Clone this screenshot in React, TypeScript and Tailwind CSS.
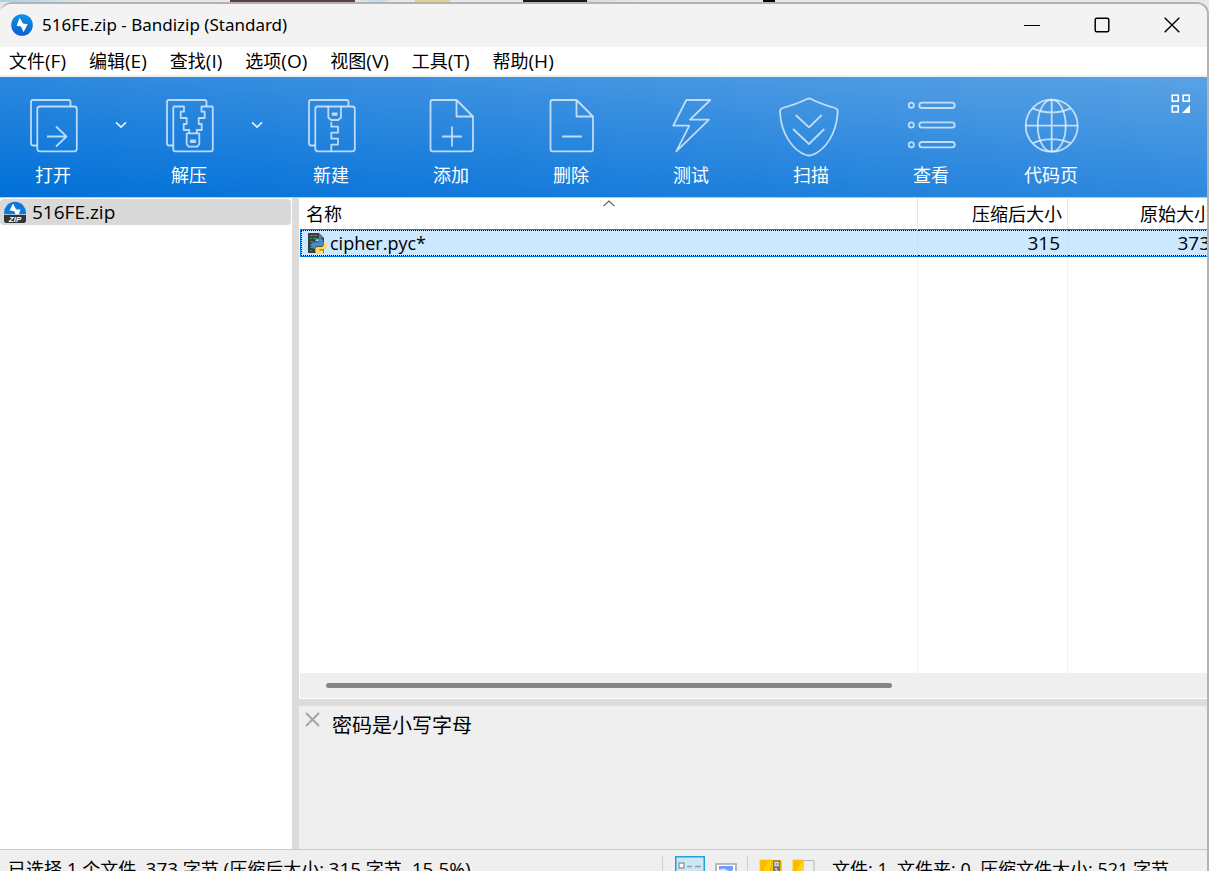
import React from "react";

type IconProps = { children: React.ReactNode };

function ToolIcon({ children }: IconProps) {
  return (
    <svg
      viewBox="0 0 60 60"
      className="size-[60px] overflow-visible"
      fill="none"
      stroke="#e3f0fc"
      strokeOpacity="0.8"
      strokeWidth="1.8"
      strokeLinejoin="round"
      aria-hidden="true"
    >
      {children}
    </svg>
  );
}

const backSheet = "M14 48.5H10Q8 48.5 8 46V5Q8 3 10 3H45.5Q47.5 3 47.5 5V9";
const page = "M35.5 3H11.5Q9.5 3 9.5 5V52Q9.5 54.3 11.5 54.3H50Q52 54.3 52 52V19.5ZM35.5 3V19.5H52";

const icons = {
  open: (
    <>
      <path d={backSheet} />
      <rect x="14.3" y="9.5" width="39.5" height="44.8" rx="2.5" />
      <path d="M24 39.5H43.5M33 29.5L43.5 39.5L33 49.5" />
    </>
  ),
  extract: (
    <>
      <path d={backSheet} />
      <path d="M14.3 9.5H25V14.7H21.7V21H27.7V27H24.7V33H30.3V36.3M53.8 9.5H42.5V14.7H45.7V21H39.7V27H42.7V33H37.7V36.3M14.3 9.5V52.3Q14.3 54.3 16.3 54.3H51.8Q53.8 54.3 53.8 52.3V9.5" />
      <path d="M27.7 36.3H40.3V47L38.3 49.7H29.7L27.7 47Z" />
      <rect x="31.8" y="43.5" width="4.4" height="1.6" />
    </>
  ),
  create: (
    <>
      <path d={backSheet} />
      <rect x="14.3" y="9.5" width="39.5" height="44.8" rx="2.5" />
      <path d="M27.3 9.5V20.5L30 23H37.3L40 20.5V9.5" />
      <rect x="31.8" y="16.3" width="3.8" height="1.6" />
      <path d="M30.3 25V29.7H37V35.7H30.3V41.7H37V47.7H30.3V54.3" />
    </>
  ),
  add: (
    <>
      <path d={page} />
      <path d="M31 29.5V49.5M21 39.5H41" />
    </>
  ),
  remove: (
    <>
      <path d={page} />
      <path d="M21 39.5H41" />
    </>
  ),
  test: <path d="M25.3 3H49.3L29 22.7H48L15.3 54.3L28.3 28.7H12.3Z" />,
  scan: (
    <>
      <path d="M26 2Q28 1 30 2Q40 7 54 11Q57 12 56.7 15C55.5 38 43 54 31 58Q28 59 25 58C13 54 0 38 -1 15Q-1.2 12 1.5 11Q16 7 26 2Z" />
      <path d="M14.7 18L28 30.3L40.7 18M12 32L28 47L43.3 32" />
    </>
  ),
  view: (
    <>
      <circle cx="10.3" cy="8.3" r="2.6" />
      <circle cx="10.3" cy="28" r="2.6" />
      <circle cx="10.3" cy="47.7" r="2.6" />
      <rect x="18.3" y="5.7" width="35.4" height="5.3" rx="2.6" />
      <rect x="18.3" y="25.4" width="35.4" height="5.3" rx="2.6" />
      <rect x="18.3" y="45" width="35.4" height="5.3" rx="2.6" />
    </>
  ),
  globe: (
    <>
      <circle cx="30.7" cy="28.7" r="26" />
      <path d="M30.7 2.7V54.7M4.7 28.7H56.7M11.7 11.3Q30.7 19.5 49.7 11.3M11.7 46.1Q30.7 38 49.7 46.1" />
      <ellipse cx="30.7" cy="28.7" rx="14" ry="26" />
    </>
  ),
};

function ToolButton({ label, icon, className = "w-[120px]" }: { label: string; icon: React.ReactNode; className?: string }) {
  return (
    <button type="button" className={`${className} flex shrink-0 flex-col items-center pt-5 text-lg text-white`}>
      <ToolIcon>{icon}</ToolIcon>
      <span className="mt-1">{label}</span>
    </button>
  );
}

function DropArrow({ label }: { label: string }) {
  return (
    <button type="button" aria-label={label} className="flex w-[30px] justify-center pt-11">
      <svg viewBox="0 0 12 8" className="h-2 w-3" fill="none" stroke="#e3f0fc" strokeWidth="1.7">
        <path d="M1 1.3L6 6L11 1.3" />
      </svg>
    </button>
  );
}

function AppLogo() {
  return (
    <svg viewBox="0 0 22 22" className="size-[22px]" aria-hidden="true">
      <defs>
        <linearGradient id="logo" x1="0" y1="0" x2="0" y2="1">
          <stop offset="0" stopColor="#0d93e2" />
          <stop offset="1" stopColor="#0b5fd0" />
        </linearGradient>
      </defs>
      <circle cx="11" cy="11" r="10.8" fill="url(#logo)" />
      <path d="M8.6 3.8L5.6 11.8L10 12.4L12.6 18.3L16.6 10.2L12 9.6Z" fill="#fff" />
    </svg>
  );
}

function ZipIcon() {
  return (
    <svg viewBox="0 0 22 22" className="size-[22px]" aria-hidden="true">
      <path d="M0.2 13.2A10.9 10.9 0 1 1 21.8 13.2Z" fill="#0a7bdc" />
      <path d="M9 2.5L5.6 9.6L10.3 10.2L11.3 13.2H14.8L16.6 8.8L12 8.2Z" fill="#fff" />
      <path d="M0 14H22V19.5Q22 22 19.5 22H2.5Q0 22 0 19.5Z" fill="#333" />
      <text x="11" y="20.9" textAnchor="middle" fill="#fff" fontSize="8" fontWeight="700" fontStyle="italic" fontFamily="Liberation Sans, sans-serif">ZIP</text>
    </svg>
  );
}

function PycIcon() {
  return (
    <svg viewBox="0 0 20 22" className="h-[22px] w-5 shrink-0" aria-hidden="true">
      <path d="M1 1H12L17 6V21H1Z" fill="#3b3f42" />
      <path d="M12 1V6H17Z" fill="#777" />
      <path d="M3 3.5H6M7 3.5H10M3 6.5H5M6 6.5H10M3 9.5H6M3 12.5H5M3 15.5H5M3 18.5H5" stroke="#27a53c" strokeWidth="1.2" />
      <path d="M7.8 9Q7.8 6.3 12 6.3Q16 6.3 16 9V12.3Q16 14.3 13.8 14.3H10Q8 14.3 8 16.7H6.5Q4 16 4 13.3Q4 10.3 7.3 10.3H12V9.6H7.8Z" fill="#4a8cc7" />
      <path d="M16.6 10.5H17.5Q20 11 20 14Q20 17.5 17 17.5H12.5V18.2H16.5V19.5Q16.5 22 12.5 22Q8.3 22 8.3 19.5V17Q8.3 15 10.6 15H14Q16.6 15 16.6 13Z" fill="#ffdc50" />
      <circle cx="10.3" cy="8.3" r="0.8" fill="#fff" />
      <circle cx="14.4" cy="20" r="0.8" fill="#fff" />
    </svg>
  );
}

function FolderIcon({ zipped }: { zipped: boolean }) {
  return (
    <svg viewBox="0 0 23 20" className="h-5 w-[23px]" aria-hidden="true">
      <path d="M11 1.5H22V20H11Z" fill={zipped ? "#f6bd00" : "#eee"} stroke={zipped ? "#e0a800" : "#b5b5b5"} />
      <path d="M0.5 0.5H12V7L10 11V20H0.5Z" fill="#ffd400" />
      <path d="M1.5 1.5H11L5 9V20H1.5Z" fill="#fbb800" />
      {zipped && (
        <>
          <rect x="14" y="1.5" width="7" height="18.5" fill="#777" />
          <path d="M16 3.5H19V6.5H16ZM16 10H18M17 12H19M16 14H18M17 16H19" fill="none" stroke="#ddd" strokeWidth="1.3" />
        </>
      )}
    </svg>
  );
}

const menus: [string, string][] = [
  ["文件", "(F)"],
  ["编辑", "(E)"],
  ["查找", "(I)"],
  ["选项", "(O)"],
  ["视图", "(V)"],
  ["工具", "(T)"],
  ["帮助", "(H)"],
];

function Num({ children }: { children: string }) {
  return <span className="text-[19px] leading-6">{children}</span>;
}

export default function App() {
  return (
    <div className="h-screen overflow-hidden bg-[#e8e8e8] font-['Open_Sans','Noto_Sans_CJK_SC',sans-serif] text-lg leading-6 text-black">
      <div className="flex h-[calc(100vh+20px)] flex-col">
        <div className="h-[2px] shrink-0 bg-[linear-gradient(to_right,#a9cfe6_0,#e2e6e8_90px,#e8e8e8_230px,#5b4040_230px,#5b4040_355px,#e8e8e8_355px,#b8dbe9_380px,#e8e8e8_392px,#e8e8e8_415px,#e4cf83_415px,#e4cf83_450px,#e8e8e8_450px,#e8e8e8_523px,#181818_523px,#181818_587px,#d8d8d8_587px,#e8e8e8_640px,#e8e8e8_763px,#000_763px,#000_775px,#e8e8e8_775px)]" />
        <div className="flex min-h-0 flex-1 flex-col overflow-hidden rounded-t-xl border-t-2 border-r-2 border-[#b3b3b3] bg-white">
          <header className="flex h-[43px] shrink-0 items-center bg-[#f3f3f3] pb-[2px] pl-[11px]">
            <AppLogo />
            <h1 className="ml-[9px] flex-1 font-['Noto_Sans',sans-serif] text-[17px]">516FE.zip - Bandizip (Standard)</h1>
            <div className="flex h-full">
              <button type="button" aria-label="最小化" className="flex w-[70px] items-center justify-center">
                <svg viewBox="0 0 16 16" className="size-4" stroke="#000" strokeWidth="1"><path d="M0 8.5H16" /></svg>
              </button>
              <button type="button" aria-label="最大化" className="flex w-[70px] items-center justify-center">
                <svg viewBox="0 0 16 16" className="size-4" fill="none" stroke="#000" strokeWidth="1.5"><rect x="1.2" y="1.2" width="13.6" height="13.6" rx="1.5" /></svg>
              </button>
              <button type="button" aria-label="关闭" className="flex w-[70px] items-center justify-center">
                <svg viewBox="0 0 16 16" className="size-4" stroke="#000" strokeWidth="1.4"><path d="M0.7 0.7L15.3 15.3M15.3 0.7L0.7 15.3" /></svg>
              </button>
            </div>
          </header>

          <nav className="flex h-[30px] shrink-0 items-center gap-[23px] border-b-2 border-[#f0f0f0] bg-white pl-[9px]">
            {menus.map(([name, key]) => (
              <button type="button" key={name} className="whitespace-nowrap">
                {name}
                <Num>{key}</Num>
              </button>
            ))}
          </nav>

          <div className="flex h-[121px] shrink-0 border-b border-[#c4c8cc] bg-[linear-gradient(to_top_right,#0070d8,#2c88de,#5aa2e4)]">
            <ToolButton label="打开" icon={icons.open} className="w-[106px]" />
            <DropArrow label="打开选项" />
            <ToolButton label="解压" icon={icons.extract} className="w-[106px]" />
            <DropArrow label="解压选项" />
            <div className="-ml-px flex">
              <ToolButton label="新建" icon={icons.create} />
              <ToolButton label="添加" icon={icons.add} />
              <ToolButton label="删除" icon={icons.remove} />
              <ToolButton label="测试" icon={icons.test} />
              <ToolButton label="扫描" icon={icons.scan} />
              <ToolButton label="查看" icon={icons.view} />
              <ToolButton label="代码页" icon={icons.globe} />
            </div>
            <button type="button" aria-label="工具栏布局" className="mt-[17px] mr-4 ml-auto self-start">
              <svg viewBox="0 0 20 20" className="size-5" fill="none" stroke="#fff" strokeWidth="1.6">
                <rect x="1.2" y="1.2" width="6" height="6" />
                <rect x="12.2" y="1.2" width="6" height="6" />
                <rect x="1.2" y="12" width="6" height="6" />
                <path d="M19 11V19H11Z" fill="#fff" stroke="none" />
              </svg>
            </button>
          </div>

          <main className="flex min-h-0 flex-1">
            <aside className="w-[292px] shrink-0 bg-white pt-px pr-px">
              <button type="button" className="flex h-[26px] w-full items-center gap-[6px] rounded-sm bg-[#d9d9d9] pl-1">
                <ZipIcon />
                <Num>516FE.zip</Num>
              </button>
            </aside>
            <div className="w-[7px] shrink-0 bg-[#dcdcdc]" />
            <section className="flex min-w-0 flex-1 flex-col">
              <div className="min-h-0 flex-1 overflow-hidden pl-[2px]">
                <table className="h-full w-[calc(100%+11px)] table-fixed border-separate border-spacing-0">
                  <thead>
                    <tr className="h-8">
                      <th scope="col" className="relative border-r border-[#e5e5e5] p-0 pl-[5px] text-left font-normal">
                        名称
                        <svg viewBox="0 0 12 7" className="absolute top-[2px] left-1/2 h-[7px] w-3 -translate-x-1/2" fill="none" stroke="#555" strokeWidth="1.1">
                          <path d="M0.5 6.2L6 1L11.5 6.2" />
                        </svg>
                      </th>
                      <th scope="col" className="w-[150px] border-r border-[#e5e5e5] p-0 pr-[5px] text-right font-normal">压缩后大小</th>
                      <th scope="col" className="w-[150px] p-0 pr-[6px] text-right font-normal">原始大小</th>
                    </tr>
                  </thead>
                  <tbody>
                    <tr className="h-[26px] bg-[#cce8ff] outline outline-[#0078d7]">
                      <td className="border-y border-r border-l border-dotted border-y-black border-r-[#b9dcf5] border-l-black p-0 pl-[5px]">
                        <div className="flex h-6 items-center gap-[3px]">
                          <PycIcon />
                          <span>cipher.pyc*</span>
                        </div>
                      </td>
                      <td className="border-y border-r border-dotted border-y-black border-r-[#b9dcf5] p-0 pr-[7px] text-right text-[19px] leading-6">315</td>
                      <td className="border-y border-dotted border-y-black p-0 pr-2 text-right text-[19px] leading-6">373</td>
                    </tr>
                    <tr aria-hidden="true">
                      <td className="border-r border-[#eef2f7] p-0" />
                      <td className="border-r border-[#eef2f7] p-0" />
                      <td className="p-0" />
                    </tr>
                  </tbody>
                </table>
              </div>
              <div className="mb-px ml-px flex h-[25px] shrink-0 items-center bg-[#efefef] pr-8 pl-[26px]">
                <div className="h-[5px] w-2/3 rounded-full bg-[#858585]" />
              </div>
              <div className="h-[7px] shrink-0 bg-[#dcdcdc]" />
              <div className="flex h-[143px] shrink-0 gap-3 bg-[#efefef] pt-[6px] pl-[6px]">
                <button type="button" aria-label="关闭注释" className="self-start">
                  <svg viewBox="0 0 15 15" className="size-[15px]" stroke="#a5a5a5" strokeWidth="2"><path d="M1 1L14 14M14 1L1 14" /></svg>
                </button>
                <p className="pt-[2px] text-xl leading-6">密码是小写字母</p>
              </div>
            </section>
          </main>

          <footer className="flex h-[42px] shrink-0 border-t border-[#c8c8c8] bg-[#efefef] pt-[6px]">
            <p className="w-[662px] shrink-0 pt-px pl-2 whitespace-nowrap">
              已选择 <Num>1</Num> 个文件, <Num>373</Num> 字节 <Num>(</Num>压缩后大小: <Num>315</Num> 字节<Num>, 15.5%)</Num>
            </p>
            <div className="flex w-[86px] shrink-0 items-start gap-[10px] border-x border-[#d0d0d0] pl-3">
              <button type="button" aria-label="详细列表">
                <svg viewBox="0 0 30 30" className="size-[30px]">
                  <rect x="0.75" y="0.75" width="28.5" height="28.5" fill="#cce8f7" stroke="#26a0da" strokeWidth="1.5" />
                  <path d="M4 7H9V12H4ZM4 16H9V21H4ZM12 10.5H17M20 10.5H26M12 18.5H17M20 18.5H26" fill="#fff" stroke="#909ca3" strokeWidth="1.4" />
                </svg>
              </button>
              <button type="button" aria-label="缩略图" className="pt-[7px]">
                <svg viewBox="0 0 22 18" className="h-[18px] w-[22px]">
                  <rect x="1" y="1" width="20" height="16" fill="#fff" stroke="#aaa" strokeWidth="1.6" />
                  <path d="M4 3H18V14H4Z" fill="#6d9eff" />
                  <path d="M4 7Q8 4 12 7Q15 9 18 7V9H4Z" fill="#d8e6ff" />
                </svg>
              </button>
            </div>
            <div className="flex items-start gap-[10px] pt-[3px] pl-[11px]">
              <FolderIcon zipped />
              <FolderIcon zipped={false} />
            </div>
            <p className="pt-px pl-[17px] whitespace-nowrap">文件: 1, 文件夹: 0, 压缩文件大小: 521 字节</p>
          </footer>
        </div>
      </div>
    </div>
  );
}
